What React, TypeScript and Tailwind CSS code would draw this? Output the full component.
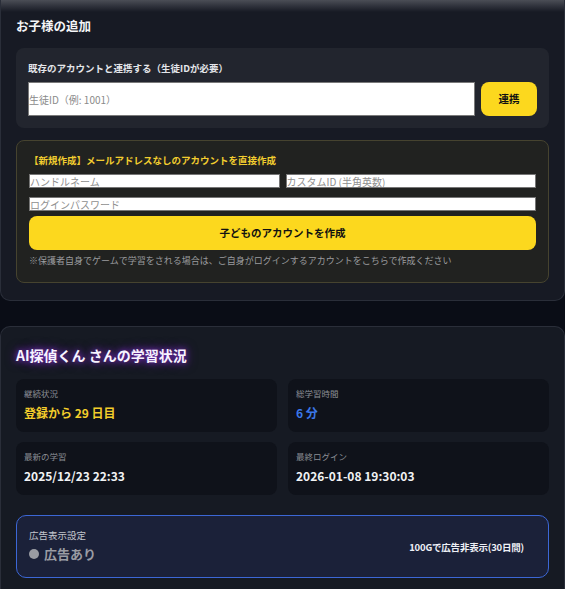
import React from "react";

const stats = [
  { label: "継続状況", value: "登録から 29 日目", color: "text-[#f3cd2b]" },
  { label: "総学習時間", value: "6 分", color: "text-[#3b78ea]" },
  { label: "最新の学習", value: "2025/12/23 22:33", color: "text-[#f1f2f4]" },
  { label: "最終ログイン", value: "2026-01-08 19:30:03", color: "text-[#f1f2f4]" },
];

const App = () => {
  return (
    <div className="min-h-screen bg-[#0a0d16] font-['Noto_Sans_CJK_JP','Noto_Sans',sans-serif] text-white">
      {/* add child */}
      <section className="bg-[#171a24] border border-t-0 border-[#2a2e39] rounded-b-[10px] px-[15px] pb-[17px]">
        <div className="-mx-[15px] h-[12px] bg-gradient-to-b from-[#4b4e56] to-[#171a24]" />
        <h2 className="text-[12.5px] font-bold leading-[18px] mt-[5px] text-[#f4f5f7]">
          お子様の追加
        </h2>
        <div className="mt-[13px] bg-[#22252e] rounded-lg px-3 pt-3 pb-3">
          <p className="text-[9.5px] font-bold leading-4 text-[#e4e6ea]">
            既存のアカウントと連携する（生徒IDが必要）
          </p>
          <div className="mt-[6px] flex gap-[6px]">
            <input
              className="flex-1 h-[34px] bg-white border border-[#7a7a7a] px-0 text-[10px] text-black placeholder:text-[#8a8a8a] outline-none"
              placeholder="生徒ID（例: 1001）"
            />
            <button className="w-[56px] h-[34px] rounded-lg bg-[#fcd81e] text-[10.5px] font-bold text-[#111]">
              連携
            </button>
          </div>
        </div>
        <div className="mt-3 bg-[#212220] border border-[#46432f] rounded-lg px-3 pt-3 pb-[15px]">
          <p className="text-[9.5px] font-bold leading-[14px] text-[#f2cd2f]">
            【新規作成】メールアドレスなしのアカウントを直接作成
          </p>
          <div className="mt-[7px] grid grid-cols-2 gap-[6px]">
            <input
              className="h-[14px] bg-white border border-[#767676] text-[10px] leading-none text-black placeholder:text-[#8f8f8f] outline-none"
              placeholder="ハンドルネーム"
            />
            <input
              className="h-[14px] bg-white border border-[#767676] text-[10px] leading-none text-black placeholder:text-[#8f8f8f] outline-none"
              placeholder="カスタムID (半角英数)"
            />
          </div>
          <input
            type="password"
            className="mt-[9px] block w-full h-[14px] bg-white border border-[#767676] text-[10px] leading-none text-black placeholder:text-[#8f8f8f] outline-none"
            placeholder="ログインパスワード"
          />
          <button className="mt-[5px] w-full h-[34px] rounded-lg bg-[#fcd81e] text-[10.5px] font-bold text-[#111]">
            子どものアカウントを作成
          </button>
          <p className="mt-[5px] text-[9px] leading-3 text-[#9a9b9e]">
            ※保護者自身でゲームで学習をされる場合は、ご自身がログインするアカウントをこちらで作成ください
          </p>
        </div>
      </section>

      {/* study status */}
      <section className="mt-[25px] bg-[#161a23] border border-b-0 border-[#2a2e39] rounded-t-[10px] px-[15px] pt-[18px] pb-10">
        <h2 className="text-[14px] font-bold leading-5 text-[#f7f3ff] [text-shadow:0_0_6px_rgba(147,51,234,0.9),0_0_12px_rgba(126,34,206,0.6)]">
          AI探偵くん さんの学習状況
        </h2>
        <div className="mt-[14px] grid grid-cols-2 gap-x-[11px] gap-y-[10px]">
          {stats.map((s) => (
            <div key={s.label} className="bg-[#0f121a] rounded-lg px-[8px] pt-2 pb-[10px]">
              <p className="text-[8.5px] leading-3 text-[#8b8e95]">{s.label}</p>
              <p className={`mt-[5px] text-[12px] font-bold leading-[18px] ${s.color}`}>
                {s.value}
              </p>
            </div>
          ))}
        </div>
        <div className="mt-[20px] bg-[#1b2139] border border-[#3c67d6] rounded-[10px] px-3 pt-3 pb-[14px] flex items-center justify-between">
          <div>
            <p className="text-[9.5px] leading-[14px] text-[#c3c6cd]">広告表示設定</p>
            <p className="mt-[3px] flex items-center gap-[5px] text-[13px] font-bold leading-[18px] text-[#9a9ca3]">
              <span className="inline-block w-[10px] h-[10px] rounded-full bg-[#9a9ca3]" />
              広告あり
            </p>
          </div>
          <div className="pr-3 pt-1 text-[9.5px] font-bold tracking-[-0.2px] text-[#eef0f6]">
            100Gで広告非表示(30日間)
          </div>
        </div>
      </section>
    </div>
  );
};

export default App;
